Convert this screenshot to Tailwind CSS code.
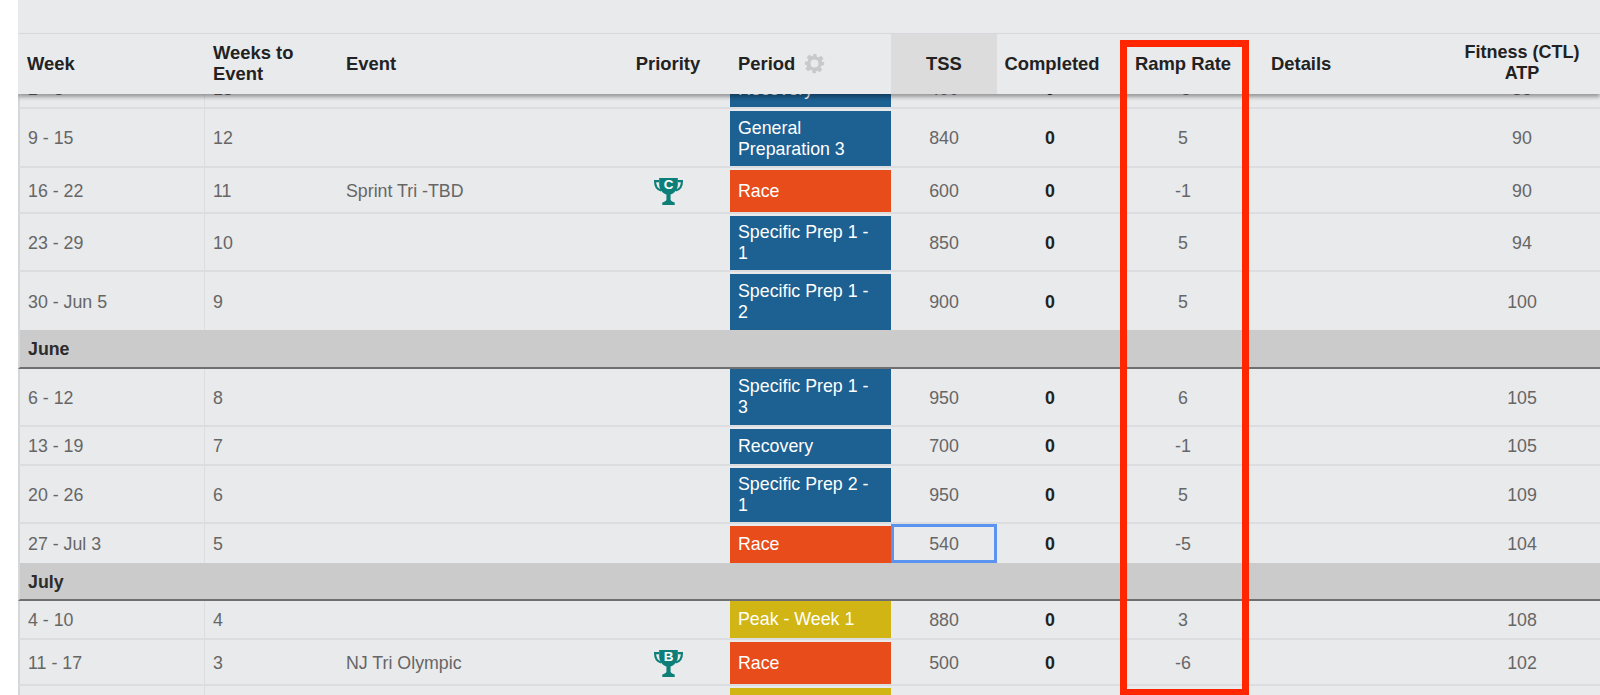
<!DOCTYPE html>
<html lang="en">
<head>
<meta charset="utf-8">
<title>Annual Training Plan</title>
<script src="https://cdn.jsdelivr.net/npm/@tailwindcss/browser@4"></script>
</head>
<body class="bg-white">
<div class="relative h-[695px] w-[1600px] overflow-hidden pl-[18px] font-['Liberation_Sans',Arial,sans-serif] text-[17.8px] leading-[21px] text-[#666]">
 <div class="h-full overflow-hidden bg-[#e9eaec]">

  <!-- top band -->
  <div class="h-[34px] border-b border-[#dcdde0]"></div>

  <!-- table header -->
  <div class="relative z-10 flex h-[60px] items-center bg-[#e9eaec] text-[18.4px] font-bold text-[#222] shadow-[0_3px_4px_0_rgba(0,0,0,0.35)]">
    <div class="mb-[2px] w-[187px] pl-[9px]">Week</div>
    <div class="mb-[2px] w-[133px] pl-[8px]">Weeks to<br>Event</div>
    <div class="mb-[2px] w-[268px] pl-[8px]">Event</div>
    <div class="mb-[2px] w-[124px] text-center">Priority</div>
    <div class="mb-[2px] flex w-[161px] items-center gap-[9px] pl-[8px]">
      Period
      <svg class="h-[21px] w-[21px]" viewBox="0 0 24 24" fill="#c8c9cb">
        <path fill-rule="evenodd" d="M10 1h4l.7 3.2 1.900.8 2.800-1.800 2.800 2.800-1.800 2.800.8 1.900L23 10.200v3.600l-3.200.7-.8 1.900 1.800 2.800-2.800 2.800-2.800-1.800-1.900.8L14 23h-4l-.7-3.200-1.900-.8-2.800 1.800-2.800-2.800 1.800-2.800-.8-1.900L1 13.800v-3.600l3.200-.7.8-1.900L3.200 4.800 6 2l2.800 1.800 1.900-.8zM12 7.500a4.500 4.500 0 1 0 0 9 4.500 4.500 0 0 0 0-9z"/>
      </svg>
    </div>
    <div class="flex h-full w-[106px] items-center justify-center bg-[#dcdcdc] pb-[2px]">TSS</div>
    <div class="mb-[2px] w-[106px] pl-[4px] text-center">Completed</div>
    <div class="mb-[2px] w-[160px] text-center">Ramp Rate</div>
    <div class="mb-[2px] w-[181px] pl-[8px]">Details</div>
    <div class="mb-[2px] w-[156px] text-center text-[18px]">Fitness (CTL)<br>ATP</div>
  </div>

  <!-- table body, scrolled so that the first row is partly under the header -->
  <div class="h-[601px] overflow-hidden">
    <table class="-mt-[24px] w-[1582px] table-fixed border-separate border-spacing-0">
      <colgroup>
        <col class="w-[187px]"><col class="w-[133px]"><col class="w-[268px]"><col class="w-[124px]"><col class="w-[161px]"><col class="w-[106px]"><col class="w-[106px]"><col class="w-[160px]"><col class="w-[181px]"><col class="w-[156px]">
      </colgroup>
      <tbody class="[&>tr>td:not([class*=bg-])]:pt-[2px]">
        <tr class="h-[39px]">
          <td class="border-l-2 border-r border-b-2 border-[#dcdde0] border-l-[#d6d7d9] pl-[8px]">2 - 8</td>
          <td class="border-b-2 border-[#dcdde0] pl-[8px]">13</td>
          <td class="border-b-2 border-[#dcdde0] pl-[8px]"></td>
          <td class="border-b-2 border-[#dcdde0]"></td>
          <td class="border-t-2 border-b-2 border-t-[#e9eaec] border-b-[#dcdde0] bg-[#1d6092] pl-[8px] pr-[14px] text-white">Recovery</td>
          <td class="border-b-2 border-[#dcdde0] text-center">400</td>
          <td class="border-b-2 border-[#dcdde0] text-center font-bold text-[#222]">0</td>
          <td class="border-b-2 border-[#dcdde0] text-center">-5</td>
          <td class="border-b-2 border-[#dcdde0]"></td>
          <td class="border-b-2 border-[#dcdde0] text-center">85</td>
        </tr>
        <tr class="h-[59px]">
          <td class="border-l-2 border-r border-b-2 border-[#dcdde0] border-l-[#d6d7d9] pl-[8px]">9 - 15</td>
          <td class="border-b-2 border-[#dcdde0] pl-[8px]">12</td>
          <td class="border-b-2 border-[#dcdde0] pl-[8px]"></td>
          <td class="border-b-2 border-[#dcdde0]"></td>
          <td class="border-t-2 border-b-2 border-t-[#e9eaec] border-b-[#dcdde0] bg-[#1d6092] pl-[8px] pr-[14px] text-white">General Preparation 3</td>
          <td class="border-b-2 border-[#dcdde0] text-center">840</td>
          <td class="border-b-2 border-[#dcdde0] text-center font-bold text-[#222]">0</td>
          <td class="border-b-2 border-[#dcdde0] text-center">5</td>
          <td class="border-b-2 border-[#dcdde0]"></td>
          <td class="border-b-2 border-[#dcdde0] text-center">90</td>
        </tr>
        <tr class="h-[46px]">
          <td class="border-l-2 border-r border-b-2 border-[#dcdde0] border-l-[#d6d7d9] pl-[8px]">16 - 22</td>
          <td class="border-b-2 border-[#dcdde0] pl-[8px]">11</td>
          <td class="border-b-2 border-[#dcdde0] pl-[8px]">Sprint Tri -TBD</td>
          <td class="border-b-2 border-[#dcdde0]">
            <svg class="mx-auto h-[29px] w-[29px]" viewBox="0 0 28 28">
              <path d="M5 1h18v6c0 5-3.500 9-7 10v5c0 1.200 2 2 4 2.500V27H8v-2.500c2-.5 4-1.300 4-2.500v-5c-3.500-1-7-5-7-10z" fill="#0e7f78"/>
              <path d="M5 4H1c0 5 2 8 6 9M23 4h4c0 5-2 8-6 9" fill="none" stroke="#0e7f78" stroke-width="2"/>
              <text x="14" y="11.500" text-anchor="middle" font-size="13" font-weight="700" fill="#fff" font-family="Liberation Sans, sans-serif">C</text>
            </svg>
          </td>
          <td class="border-t-2 border-b-2 border-t-[#e9eaec] border-b-[#dcdde0] bg-[#e84c1a] pl-[8px] pr-[14px] text-white">Race</td>
          <td class="border-b-2 border-[#dcdde0] text-center">600</td>
          <td class="border-b-2 border-[#dcdde0] text-center font-bold text-[#222]">0</td>
          <td class="border-b-2 border-[#dcdde0] text-center">-1</td>
          <td class="border-b-2 border-[#dcdde0]"></td>
          <td class="border-b-2 border-[#dcdde0] text-center">90</td>
        </tr>
        <tr class="h-[58px]">
          <td class="border-l-2 border-r border-b-2 border-[#dcdde0] border-l-[#d6d7d9] pl-[8px]">23 - 29</td>
          <td class="border-b-2 border-[#dcdde0] pl-[8px]">10</td>
          <td class="border-b-2 border-[#dcdde0] pl-[8px]"></td>
          <td class="border-b-2 border-[#dcdde0]"></td>
          <td class="border-t-2 border-b-2 border-t-[#e9eaec] border-b-[#dcdde0] bg-[#1d6092] pl-[8px] pr-[14px] text-white">Specific Prep 1 - 1</td>
          <td class="border-b-2 border-[#dcdde0] text-center">850</td>
          <td class="border-b-2 border-[#dcdde0] text-center font-bold text-[#222]">0</td>
          <td class="border-b-2 border-[#dcdde0] text-center">5</td>
          <td class="border-b-2 border-[#dcdde0]"></td>
          <td class="border-b-2 border-[#dcdde0] text-center">94</td>
        </tr>
        <tr class="h-[58px]">
          <td class="border-l-2 border-r border-[#dcdde0] border-l-[#d6d7d9] pl-[8px]">30 - Jun 5</td>
          <td class="pl-[8px]">9</td>
          <td class="pl-[8px]"></td>
          <td></td>
          <td class="border-t-2 border-t-[#e9eaec] bg-[#1d6092] pl-[8px] pr-[14px] text-white">Specific Prep 1 - 2</td>
          <td class="text-center">900</td>
          <td class="text-center font-bold text-[#222]">0</td>
          <td class="text-center">5</td>
          <td></td>
          <td class="text-center">100</td>
        </tr>
        <tr class="h-[39px]">
          <td colspan="10" class="border-l-2 border-b-2 border-b-[#6f6f6f] border-l-[#d6d7d9] bg-[#cbcbcb] pl-[8px] pt-[2px] font-bold text-[#2b2b2b]">June</td>
        </tr>
        <tr class="h-[58px]">
          <td class="border-l-2 border-r border-b-2 border-[#dcdde0] border-l-[#d6d7d9] pl-[8px]">6 - 12</td>
          <td class="border-b-2 border-[#dcdde0] pl-[8px]">8</td>
          <td class="border-b-2 border-[#dcdde0] pl-[8px]"></td>
          <td class="border-b-2 border-[#dcdde0]"></td>
          <td class="border-b-2 border-b-[#dcdde0] bg-[#1d6092] pl-[8px] pr-[14px] text-white">Specific Prep 1 - 3</td>
          <td class="border-b-2 border-[#dcdde0] text-center">950</td>
          <td class="border-b-2 border-[#dcdde0] text-center font-bold text-[#222]">0</td>
          <td class="border-b-2 border-[#dcdde0] text-center">6</td>
          <td class="border-b-2 border-[#dcdde0]"></td>
          <td class="border-b-2 border-[#dcdde0] text-center">105</td>
        </tr>
        <tr class="h-[39px]">
          <td class="border-l-2 border-r border-b-2 border-[#dcdde0] border-l-[#d6d7d9] pl-[8px]">13 - 19</td>
          <td class="border-b-2 border-[#dcdde0] pl-[8px]">7</td>
          <td class="border-b-2 border-[#dcdde0] pl-[8px]"></td>
          <td class="border-b-2 border-[#dcdde0]"></td>
          <td class="border-t-2 border-b-2 border-t-[#e9eaec] border-b-[#dcdde0] bg-[#1d6092] pl-[8px] pr-[14px] text-white">Recovery</td>
          <td class="border-b-2 border-[#dcdde0] text-center">700</td>
          <td class="border-b-2 border-[#dcdde0] text-center font-bold text-[#222]">0</td>
          <td class="border-b-2 border-[#dcdde0] text-center">-1</td>
          <td class="border-b-2 border-[#dcdde0]"></td>
          <td class="border-b-2 border-[#dcdde0] text-center">105</td>
        </tr>
        <tr class="h-[58px]">
          <td class="border-l-2 border-r border-b-2 border-[#dcdde0] border-l-[#d6d7d9] pl-[8px]">20 - 26</td>
          <td class="border-b-2 border-[#dcdde0] pl-[8px]">6</td>
          <td class="border-b-2 border-[#dcdde0] pl-[8px]"></td>
          <td class="border-b-2 border-[#dcdde0]"></td>
          <td class="border-t-2 border-b-2 border-t-[#e9eaec] border-b-[#dcdde0] bg-[#1d6092] pl-[8px] pr-[14px] text-white">Specific Prep 2 - 1</td>
          <td class="border-b-2 border-[#dcdde0] text-center">950</td>
          <td class="border-b-2 border-[#dcdde0] text-center font-bold text-[#222]">0</td>
          <td class="border-b-2 border-[#dcdde0] text-center">5</td>
          <td class="border-b-2 border-[#dcdde0]"></td>
          <td class="border-b-2 border-[#dcdde0] text-center">109</td>
        </tr>
        <tr class="h-[39px]">
          <td class="border-l-2 border-r border-[#dcdde0] border-l-[#d6d7d9] pl-[8px]">27 - Jul 3</td>
          <td class="pl-[8px]">5</td>
          <td class="pl-[8px]"></td>
          <td></td>
          <td class="border-t-2 border-t-[#e9eaec] bg-[#e84c1a] pl-[8px] pr-[14px] text-white">Race</td>
          <td class="border-[3px] border-[#5b93f0] text-center">540</td>
          <td class="text-center font-bold text-[#222]">0</td>
          <td class="text-center">-5</td>
          <td></td>
          <td class="text-center">104</td>
        </tr>
        <tr class="h-[38px]">
          <td colspan="10" class="border-l-2 border-b-2 border-b-[#6f6f6f] border-l-[#d6d7d9] bg-[#cbcbcb] pl-[8px] pt-[2px] font-bold text-[#2b2b2b]">July</td>
        </tr>
        <tr class="h-[39px]">
          <td class="border-l-2 border-r border-b-2 border-[#dcdde0] border-l-[#d6d7d9] pl-[8px]">4 - 10</td>
          <td class="border-b-2 border-[#dcdde0] pl-[8px]">4</td>
          <td class="border-b-2 border-[#dcdde0] pl-[8px]"></td>
          <td class="border-b-2 border-[#dcdde0]"></td>
          <td class="border-b-2 border-b-[#dcdde0] bg-[#d1b514] pl-[8px] pr-[14px] text-white">Peak - Week 1</td>
          <td class="border-b-2 border-[#dcdde0] text-center">880</td>
          <td class="border-b-2 border-[#dcdde0] text-center font-bold text-[#222]">0</td>
          <td class="border-b-2 border-[#dcdde0] text-center">3</td>
          <td class="border-b-2 border-[#dcdde0]"></td>
          <td class="border-b-2 border-[#dcdde0] text-center">108</td>
        </tr>
        <tr class="h-[46px]">
          <td class="border-l-2 border-r border-b-2 border-[#dcdde0] border-l-[#d6d7d9] pl-[8px]">11 - 17</td>
          <td class="border-b-2 border-[#dcdde0] pl-[8px]">3</td>
          <td class="border-b-2 border-[#dcdde0] pl-[8px]">NJ Tri Olympic</td>
          <td class="border-b-2 border-[#dcdde0]">
            <svg class="mx-auto h-[29px] w-[29px]" viewBox="0 0 28 28">
              <path d="M5 1h18v6c0 5-3.500 9-7 10v5c0 1.200 2 2 4 2.500V27H8v-2.500c2-.5 4-1.300 4-2.500v-5c-3.500-1-7-5-7-10z" fill="#0e7f78"/>
              <path d="M5 4H1c0 5 2 8 6 9M23 4h4c0 5-2 8-6 9" fill="none" stroke="#0e7f78" stroke-width="2"/>
              <text x="14" y="11.500" text-anchor="middle" font-size="13" font-weight="700" fill="#fff" font-family="Liberation Sans, sans-serif">B</text>
            </svg>
          </td>
          <td class="border-t-2 border-b-2 border-t-[#e9eaec] border-b-[#dcdde0] bg-[#e84c1a] pl-[8px] pr-[14px] text-white">Race</td>
          <td class="border-b-2 border-[#dcdde0] text-center">500</td>
          <td class="border-b-2 border-[#dcdde0] text-center font-bold text-[#222]">0</td>
          <td class="border-b-2 border-[#dcdde0] text-center">-6</td>
          <td class="border-b-2 border-[#dcdde0]"></td>
          <td class="border-b-2 border-[#dcdde0] text-center">102</td>
        </tr>
        <tr class="h-[39px]">
          <td class="border-l-2 border-r border-[#dcdde0] border-l-[#d6d7d9] pl-[8px]"></td>
          <td colspan="3"></td>
          <td class="border-t-2 border-t-[#e9eaec] bg-[#d1b514]"></td>
          <td colspan="5"></td>
        </tr>
      </tbody>
    </table>
  </div>
 </div>

  <!-- red annotation drawn over the screenshot -->
  <div class="absolute left-[1120px] top-[40px] z-20 h-[656px] w-[129px] border-[7px] border-[#ff2600]"></div>
</div>
</body>
</html>
